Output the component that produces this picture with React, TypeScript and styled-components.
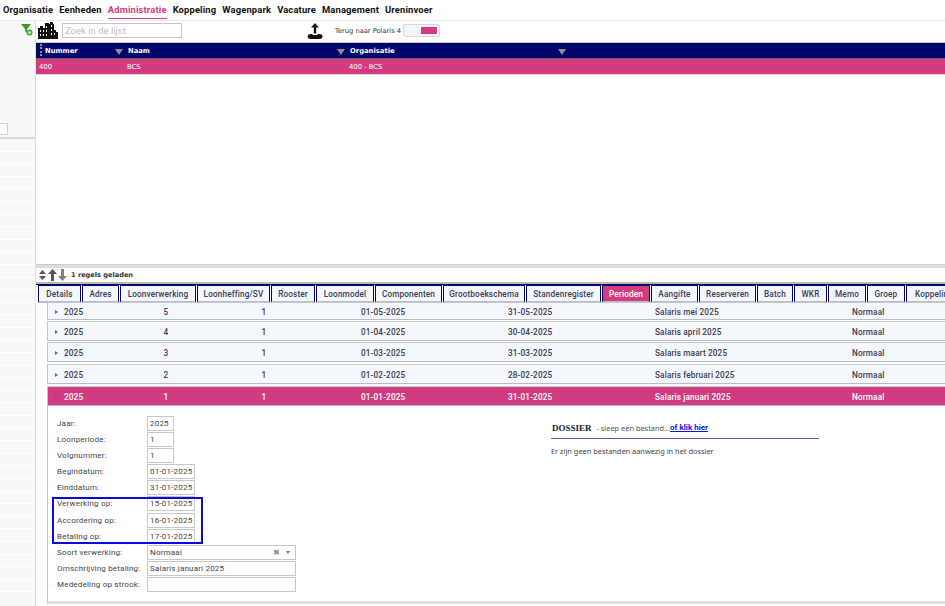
import React, { FC } from 'react';
import styled, { createGlobalStyle } from 'styled-components';

const PINK = '#d33b80';
const NAVY = '#04046e';

const GlobalStyle = createGlobalStyle`
  html, body {
    margin: 0;
    padding: 0;
    background: white;
    overflow: hidden;
  }
  * { box-sizing: border-box; }
`;

const Page = styled.div`
  width: 945px;
  height: 606px;
  display: flex;
  flex-direction: column;
  overflow: hidden;
  font-family: Roboto, sans-serif;
  color: #333;
`;

const Nav = styled.nav`
  height: 21px;
  flex: none;
  display: flex;
  gap: 6px;
  padding-left: 3px;
  border-bottom: 1px solid #e6eaf2;
`;

const NavItem = styled.a<{ $active?: boolean }>`
  height: 19px;
  font: bold 9.4px/19px Roboto, sans-serif;
  letter-spacing: 0.15px;
  color: ${p => (p.$active ? PINK : '#111')};
  border-bottom: ${p => (p.$active ? `1px solid ${PINK}` : 'none')};
`;

const Body = styled.div`
  flex: 1;
  display: flex;
  min-height: 0;
`;

const Sidebar = styled.aside`
  width: 36px;
  flex: none;
  background: #f8f8f8;
  border-right: 1px solid #e2e2e6;
  display: flex;
  flex-direction: column;
`;

const FilterSlot = styled.div`
  height: 102px;
  display: flex;
  justify-content: flex-end;
  padding: 3px 2px 0 0;
`;

const SideInput = styled.div`
  width: 8px;
  height: 12px;
  flex: none;
  background: white;
  border: 1px solid #d0d0d0;
  border-left: none;
`;

const SideHead = styled.div`
  height: 3px;
  flex: none;
  margin-top: 1px;
  border-bottom: 2px solid #d8d8d8;
`;

const SideRow = styled.div`
  height: 12.6px;
  flex: none;
  border-bottom: 1px solid #fff;
`;

const Main = styled.main`
  flex: 1;
  min-width: 0;
  display: flex;
  flex-direction: column;
`;

const Toolbar = styled.div`
  height: 21px;
  flex: none;
  display: flex;
  align-items: center;
  padding: 0 0 2px 2px;
`;

const SearchBox = styled.div`
  width: 120px;
  height: 15px;
  margin-left: 4px;
  border: 1px solid #c4c4c4;
  padding-left: 2px;
  font-size: 9.5px;
  line-height: 13px;
  color: #c0c0c0;
`;

const UploadButton = styled.div`
  margin-left: 125px;
  display: flex;
`;

const BackLabel = styled.span`
  margin-left: 12px;
  font: 6.7px "DejaVu Sans", sans-serif;
  color: #333;
`;

const Toggle = styled.div`
  width: 37px;
  height: 13px;
  margin-left: 2px;
  padding: 2px 2px 2px 17px;
  background: #f4f6fa;
  border: 1px solid #d8d8d8;
  border-radius: 2px;
`;

const ToggleKnob = styled.div`
  height: 100%;
  background: ${PINK};
`;

const ListHead = styled.div`
  height: 17px;
  flex: none;
  display: grid;
  grid-template-columns: 87px 222px 221px;
  background: ${NAVY};
  border-top: 1px solid #ccc;
  border-bottom: 1px solid #666;
  font: bold 6.8px/17px "DejaVu Sans", sans-serif;
  color: white;
`;

const HeadCell = styled.div<{ $grip?: boolean }>`
  position: relative;
  padding-left: ${p => (p.$grip ? '9px' : '5px')};
`;

const SortArrow = styled.span`
  position: absolute;
  right: 0;
  top: 6px;
  width: 0;
  height: 0;
  border-left: 4.5px solid transparent;
  border-right: 4.5px solid transparent;
  border-top: 6px solid #8d8d8d;
`;

const Grip = styled.span`
  position: absolute;
  left: 4px;
  top: 1px;
  height: 12px;
  border-left: 2px dotted #a89060;
`;

const ListRow = styled.div`
  height: 16px;
  flex: none;
  display: grid;
  grid-template-columns: 88px 222px 1fr;
  padding-left: 3px;
  background: ${PINK};
  font: 6.8px/17px "DejaVu Sans", sans-serif;
  color: white;
  border-bottom: 1px solid #e2d5dc;
`;

const ListBlank = styled.div`
  height: 189px;
  flex: none;
`;

const Splitter = styled.div`
  height: 4px;
  flex: none;
  background: #dcdcdc;
  border-top: 1px solid #ccc;
`;

const StatusBar = styled.div`
  height: 14px;
  flex: none;
  display: flex;
  align-items: center;
  gap: 1px;
  padding-left: 2px;
  font: bold 6.6px "DejaVu Sans", sans-serif;
  color: #333;
`;

const StatusText = styled.span`
  margin-left: 3px;
`;

const TabBar = styled.div`
  height: 21px;
  flex: none;
  display: flex;
  gap: 1px;
  padding-left: 2px;
  background: white;
  border-top: 2px solid #b8b8bc;
  box-shadow: inset 0 1px 0 ${NAVY};
  overflow: hidden;
`;

const Tab = styled.div<{ $w: number; $active?: boolean }>`
  flex: none;
  width: ${p => p.$w}px;
  height: 18px;
  margin-top: 1px;
  text-align: center;
  white-space: nowrap;
  font: 500 8.2px/17px Roboto, sans-serif;
  letter-spacing: 0.15px;
  color: ${p => (p.$active ? 'white' : '#3c3c55')};
  background: ${p => (p.$active ? PINK : '#f4f7fb')};
  border: 1px solid ${NAVY};
  border-bottom: 2px solid #b8bcc8;
  overflow: hidden;
`;

const Periods = styled.div`
  flex: 1;
  min-height: 0;
  margin-left: 11px;
  display: flex;
  flex-direction: column;
`;

const PeriodRow = styled.div<{ $active?: boolean; $h: number; $gap: number }>`
  height: ${p => p.$h}px;
  flex: none;
  display: grid;
  grid-template-columns: 16px 53px 98px 98px 195px 147px 197px 1fr;
  align-items: center;
  margin-bottom: ${p => p.$gap}px;
  padding-top: 1px;
  background: ${p => (p.$active ? PINK : '#f4f7fb')};
  border-left: 1px solid #c4c4cc;
  border-bottom: 1px solid #b8bcc4;
  box-shadow: 0 -1px 0 #c8c8d0;
  font: 500 8.2px Roboto, sans-serif;
  letter-spacing: 0.15px;
  color: ${p => (p.$active ? 'white' : '#3c3c55')};
`;

const Caret = styled.span<{ $active?: boolean }>`
  justify-self: center;
  margin-left: ${p => (p.$active ? 0 : 1)}px;
  width: 0;
  height: 0;
  border-top: 2.5px solid transparent;
  border-bottom: 2.5px solid transparent;
  border-left: 3px solid ${p => (p.$active ? '#a83a8c' : '#3a6ea5')};
`;

const NumCell = styled.span`
  text-align: center;
`;

const FromCell = styled.span`
  padding-left: 48px;
`;

const Detail = styled.div`
  position: relative;
  flex: 1;
  display: flex;
  border-left: 1px solid #c4c4cc;
  border-bottom: 3px solid #e0e0e4;
  margin-bottom: 2px;
  padding: 9px 0 0 9px;
`;

const FormGrid = styled.div`
  width: 494px;
  flex: none;
  display: flex;
  flex-direction: column;
  gap: 0.2px;
`;

const FormRow = styled.div`
  height: 16px;
  display: flex;
  align-items: center;
`;

const FormLabel = styled.label`
  width: 90px;
  flex: none;
  white-space: nowrap;
  font: 8px Roboto, sans-serif;
  letter-spacing: 0.2px;
  color: #444;
`;

const Field = styled.div<{ $w: number }>`
  width: ${p => p.$w}px;
  height: 15px;
  padding-left: 2px;
  display: flex;
  align-items: center;
  justify-content: space-between;
  white-space: nowrap;
  background: white;
  border: 1px solid #c8c8c8;
  font: 8px Roboto, sans-serif;
  letter-spacing: 0.2px;
  color: #444;
`;

const SelectTools = styled.span`
  display: flex;
  align-items: center;
  gap: 6px;
  padding-right: 5px;
  color: #888;
  font-size: 8px;
`;

const SelectArrow = styled.span`
  width: 0;
  height: 0;
  border-left: 2.5px solid transparent;
  border-right: 2.5px solid transparent;
  border-top: 3px solid #777;
`;

const Highlight = styled.div`
  position: absolute;
  left: 4px;
  top: 91px;
  width: 151px;
  height: 47px;
  border: 2px solid #0a0ae0;
  pointer-events: none;
`;

const Dossier = styled.section`
  width: 268px;
  flex: none;
  padding-top: 5px;
`;

const DossierHead = styled.div`
  height: 19px;
  display: flex;
  align-items: center;
  border-bottom: 1px solid #5a5ab0;
  padding-bottom: 3px;
  font: 7.4px "Noto Sans", sans-serif;
  color: #555;
`;

const DossierTitle = styled.strong`
  font: 600 9px "Liberation Serif", serif;
  color: #222;
  margin-right: 5px;
  padding-left: 1px;
`;

const DossierLink = styled.a`
  font: bold 8px Roboto, sans-serif;
  color: #1010e8;
  text-decoration: underline;
`;

const DossierNote = styled.p`
  margin: 7px 0 0;
  font: 7.4px "Noto Sans", sans-serif;
  color: #444;
`;

const BuildingIcon: FC = () => (
  <svg width="20" height="17" viewBox="0 0 20 17" shapeRendering="crispEdges">
    <path fill="#111" d="M0 6h2V4h3v2h2V1h4v1h1V0h3v2h1v6h2v2h2v7H0z" />
    <g fill="#fff">
      <rect x="2" y="8" width="1" height="2" />
      <rect x="5" y="8" width="1" height="2" />
      <rect x="8" y="4" width="1" height="2" />
      <rect x="13" y="3" width="1" height="2" />
      <rect x="8" y="8" width="1" height="2" />
      <rect x="13" y="7" width="1" height="2" />
      <rect x="2" y="12" width="1" height="2" />
      <rect x="5" y="12" width="1" height="2" />
      <rect x="8" y="12" width="1" height="2" />
      <rect x="13" y="11" width="1" height="2" />
      <rect x="16" y="11" width="1" height="2" />
    </g>
  </svg>
);

const FilterIcon: FC = () => (
  <svg width="12" height="12" viewBox="0 0 12 12">
    <path fill="#3f9b1e" d="M0 0h10L6 5v4L4 7V5z" />
    <circle cx="8.5" cy="8.5" r="3" fill="#33b52a" />
    <circle cx="8.5" cy="8.5" r="1.2" fill="#fff" />
  </svg>
);

const UploadIcon: FC = () => (
  <svg width="16" height="16" viewBox="0 0 16 16">
    <path fill="#111" d="M8 0l4 4.5H9.2v6H6.8v-6H4z" />
    <path fill="#111" d="M4 11c-2 0-3.5.8-3.5 2.5S2 16 4 16h8c2 0 3.5-.8 3.5-2.5S14 11 12 11h-1.5v1h-5v-1z" />
  </svg>
);

const MoveIcon: FC<{ up?: boolean; down?: boolean; dark?: boolean }> = ({ up, down, dark }) => (
  <svg width="9" height="12" viewBox="0 0 9 12">
    <g fill={dark ? '#555' : '#808080'}>
      {up && down ? (
        <>
          <path d="M4.5 1L8 5H1z" />
          <path d="M4.5 11L8 7H1z" />
        </>
      ) : up ? (
        <path d="M4.5 0L9 5H6v7H3V5H0z" />
      ) : (
        <path d="M4.5 12L9 7H6V0H3v7H0z" />
      )}
    </g>
  </svg>
);

const menu = ['Organisatie', 'Eenheden', 'Administratie', 'Koppeling', 'Wagenpark', 'Vacature', 'Management', 'Ureninvoer'];

const tabs: [string, number][] = [
  ['Details', 43], ['Adres', 37], ['Loonverwerking', 76], ['Loonheffing/SV', 73],
  ['Rooster', 44], ['Loonmodel', 58], ['Componenten', 67], ['Grootboekschema', 82],
  ['Standenregister', 75], ['Perioden', 48], ['Aangifte', 47], ['Reserveren', 57],
  ['Batch', 36], ['WKR', 33], ['Memo', 38], ['Groep', 38], ['Koppeling', 56],
];

const periods = [
  { nr: 5, from: '01-05-2025', to: '31-05-2025', name: 'Salaris mei 2025', h: 17, gap: 2 },
  { nr: 4, from: '01-04-2025', to: '30-04-2025', name: 'Salaris april 2025', h: 19, gap: 2 },
  { nr: 3, from: '01-03-2025', to: '31-03-2025', name: 'Salaris maart 2025', h: 19, gap: 3 },
  { nr: 2, from: '01-02-2025', to: '28-02-2025', name: 'Salaris februari 2025', h: 19, gap: 3 },
  { nr: 1, from: '01-01-2025', to: '31-01-2025', name: 'Salaris januari 2025', h: 19, gap: 0, active: true },
];

const fields: [string, string, number][] = [
  ['Jaar:', '2025', 27],
  ['Loonperiode:', '1', 27],
  ['Volgnummer:', '1', 27],
  ['Begindatum:', '01-01-2025', 48],
  ['Einddatum:', '31-01-2025', 48],
  ['Verwerking op:', '15-01-2025', 48],
  ['Accordering op:', '16-01-2025', 48],
  ['Betaling op:', '17-01-2025', 48],
];

export default function App() {
  return (
    <Page>
      <GlobalStyle />
      <Nav>
        {menu.map(m => (
          <NavItem key={m} $active={m === 'Administratie'}>{m}</NavItem>
        ))}
      </Nav>
      <Body>
        <Sidebar>
          <FilterSlot><FilterIcon /></FilterSlot>
          <SideInput />
          <SideHead />
          {Array.from({ length: 36 }).map((_, i) => <SideRow key={i} />)}
        </Sidebar>
        <Main>
          <Toolbar>
            <BuildingIcon />
            <SearchBox>Zoek in de lijst</SearchBox>
            <UploadButton><UploadIcon /></UploadButton>
            <BackLabel>Terug naar Polaris 4</BackLabel>
            <Toggle><ToggleKnob /></Toggle>
          </Toolbar>
          <ListHead>
            <HeadCell $grip><Grip />Nummer<SortArrow /></HeadCell>
            <HeadCell>Naam<SortArrow /></HeadCell>
            <HeadCell>Organisatie<SortArrow /></HeadCell>
          </ListHead>
          <ListRow>
            <span>400</span>
            <span>BCS</span>
            <span>400 - BCS</span>
          </ListRow>
          <ListBlank />
          <Splitter />
          <StatusBar>
            <MoveIcon up down dark />
            <MoveIcon up dark />
            <MoveIcon down />
            <StatusText>1 regels geladen</StatusText>
          </StatusBar>
          <TabBar>
            {tabs.map(([t, w]) => (
              <Tab key={t} $w={w} $active={t === 'Perioden'}>{t}</Tab>
            ))}
          </TabBar>
          <Periods>
            {periods.map(p => (
              <PeriodRow key={p.nr} $h={p.h} $gap={p.gap} $active={p.active}>
                <Caret $active={p.active} />
                <span>2025</span>
                <NumCell>{p.nr}</NumCell>
                <NumCell>1</NumCell>
                <FromCell>{p.from}</FromCell>
                <span>{p.to}</span>
                <span>{p.name}</span>
                <span>Normaal</span>
              </PeriodRow>
            ))}
            <Detail>
              <FormGrid>
                {fields.map(([label, value, w]) => (
                  <FormRow key={label}>
                    <FormLabel>{label}</FormLabel>
                    <Field $w={w}>{value}</Field>
                  </FormRow>
                ))}
                <FormRow>
                  <FormLabel>Soort verwerking:</FormLabel>
                  <Field $w={149}>
                    Normaal
                    <SelectTools>✖<SelectArrow /></SelectTools>
                  </Field>
                </FormRow>
                <FormRow>
                  <FormLabel>Omschrijving betaling:</FormLabel>
                  <Field $w={149}>Salaris januari 2025</Field>
                </FormRow>
                <FormRow>
                  <FormLabel>Mededeling op strook:</FormLabel>
                  <Field $w={149} />
                </FormRow>
              </FormGrid>
              <Dossier>
                <DossierHead>
                  <DossierTitle>DOSSIER</DossierTitle>
                  - sleep een bestand...
                  <DossierLink>of klik hier</DossierLink>
                </DossierHead>
                <DossierNote>Er zijn geen bestanden aanwezig in het dossier</DossierNote>
              </Dossier>
              <Highlight />
            </Detail>
          </Periods>
        </Main>
      </Body>
    </Page>
  );
}
